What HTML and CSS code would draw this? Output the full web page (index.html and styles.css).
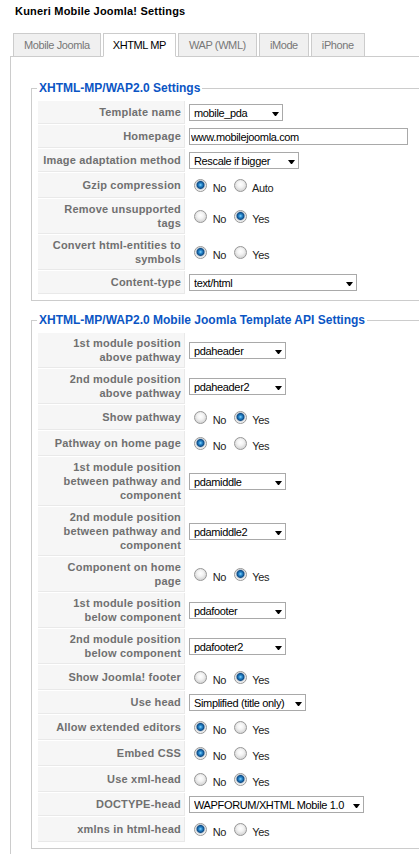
FILE: index.html
```html
<!DOCTYPE html>
<html lang="en">
<head>
    <meta charset="UTF-8">
    <meta name="viewport" content="width=device-width, initial-scale=1.0">
    <title>Kuneri Mobile Joomla! Settings</title>
    <link rel="stylesheet" href="styles.css">
</head>
<body>

<div class="page">
    <h1 class="title">Kuneri Mobile Joomla! Settings</h1>

    <ul class="tabs">
        <li>Mobile Joomla</li>
        <li class="open">XHTML MP</li>
        <li>WAP (WML)</li>
        <li>iMode</li>
        <li>iPhone</li>
    </ul>

    <div class="panel">
        <fieldset>
            <legend>XHTML-MP/WAP2.0 Settings</legend>
            <table class="admintable">
                <tr>
                    <td class="key">Template name</td>
                    <td><span class="dropdown w94"><select><option>mobile_pda</option></select></span></td>
                </tr>
                <tr>
                    <td class="key">Homepage</td>
                    <td><input type="text" class="textbox" value="www.mobilejoomla.com"></td>
                </tr>
                <tr>
                    <td class="key">Image adaptation method</td>
                    <td><span class="dropdown w110"><select><option>Rescale if bigger</option></select></span></td>
                </tr>
                <tr>
                    <td class="key">Gzip compression</td>
                    <td><input type="radio" name="gzip" id="gzip0" checked> <label for="gzip0">No</label> <input type="radio" name="gzip" id="gzip1"> <label for="gzip1">Auto</label></td>
                </tr>
                <tr>
                    <td class="key">Remove unsupported tags</td>
                    <td><input type="radio" name="striptags" id="striptags0"> <label for="striptags0">No</label> <input type="radio" name="striptags" id="striptags1" checked> <label for="striptags1">Yes</label></td>
                </tr>
                <tr>
                    <td class="key">Convert html-entities to symbols</td>
                    <td><input type="radio" name="entities" id="entities0" checked> <label for="entities0">No</label> <input type="radio" name="entities" id="entities1"> <label for="entities1">Yes</label></td>
                </tr>
                <tr>
                    <td class="key">Content-type</td>
                    <td><span class="dropdown w168"><select><option>text/html</option></select></span></td>
                </tr>
            </table>
        </fieldset>

        <fieldset>
            <legend>XHTML-MP/WAP2.0 Mobile Joomla Template API Settings</legend>
            <table class="admintable">
                <tr>
                    <td class="key">1st module position above pathway</td>
                    <td><span class="dropdown w97"><select><option>pdaheader</option></select></span></td>
                </tr>
                <tr>
                    <td class="key">2nd module position above pathway</td>
                    <td><span class="dropdown w97"><select><option>pdaheader2</option></select></span></td>
                </tr>
                <tr>
                    <td class="key">Show pathway</td>
                    <td><input type="radio" name="pathway" id="pathway0"> <label for="pathway0">No</label> <input type="radio" name="pathway" id="pathway1" checked> <label for="pathway1">Yes</label></td>
                </tr>
                <tr>
                    <td class="key">Pathway on home page</td>
                    <td><input type="radio" name="homepath" id="homepath0" checked> <label for="homepath0">No</label> <input type="radio" name="homepath" id="homepath1"> <label for="homepath1">Yes</label></td>
                </tr>
                <tr>
                    <td class="key">1st module position between pathway and component</td>
                    <td><span class="dropdown w97"><select><option>pdamiddle</option></select></span></td>
                </tr>
                <tr>
                    <td class="key">2nd module position between pathway and component</td>
                    <td><span class="dropdown w97"><select><option>pdamiddle2</option></select></span></td>
                </tr>
                <tr>
                    <td class="key">Component on home page</td>
                    <td><input type="radio" name="homecomp" id="homecomp0"> <label for="homecomp0">No</label> <input type="radio" name="homecomp" id="homecomp1" checked> <label for="homecomp1">Yes</label></td>
                </tr>
                <tr>
                    <td class="key">1st module position below component</td>
                    <td><span class="dropdown w97"><select><option>pdafooter</option></select></span></td>
                </tr>
                <tr>
                    <td class="key">2nd module position below component</td>
                    <td><span class="dropdown w97"><select><option>pdafooter2</option></select></span></td>
                </tr>
                <tr>
                    <td class="key">Show Joomla! footer</td>
                    <td><input type="radio" name="footer" id="footer0"> <label for="footer0">No</label> <input type="radio" name="footer" id="footer1" checked> <label for="footer1">Yes</label></td>
                </tr>
                <tr>
                    <td class="key">Use head</td>
                    <td><span class="dropdown w117"><select><option>Simplified (title only)</option></select></span></td>
                </tr>
                <tr>
                    <td class="key">Allow extended editors</td>
                    <td><input type="radio" name="editors" id="editors0" checked> <label for="editors0">No</label> <input type="radio" name="editors" id="editors1"> <label for="editors1">Yes</label></td>
                </tr>
                <tr>
                    <td class="key">Embed CSS</td>
                    <td><input type="radio" name="embedcss" id="embedcss0" checked> <label for="embedcss0">No</label> <input type="radio" name="embedcss" id="embedcss1"> <label for="embedcss1">Yes</label></td>
                </tr>
                <tr>
                    <td class="key">Use xml-head</td>
                    <td><input type="radio" name="xmlhead" id="xmlhead0"> <label for="xmlhead0">No</label> <input type="radio" name="xmlhead" id="xmlhead1" checked> <label for="xmlhead1">Yes</label></td>
                </tr>
                <tr>
                    <td class="key">DOCTYPE-head</td>
                    <td><span class="dropdown w175"><select><option>WAPFORUM/XHTML Mobile 1.0</option></select></span></td>
                </tr>
                <tr>
                    <td class="key">xmlns in html-head</td>
                    <td><input type="radio" name="xmlns" id="xmlns0" checked> <label for="xmlns0">No</label> <input type="radio" name="xmlns" id="xmlns1"> <label for="xmlns1">Yes</label></td>
                </tr>
            </table>
        </fieldset>
    </div>
</div>

</body>
</html>
```

FILE: styles.css
```css
html, body {
    overflow: hidden;
}
body {
    margin: 0;
    font-family: "Liberation Sans", Arial, sans-serif;
    font-size: 11px;
    color: #333;
    background: #fff;
}
.page {
    width: 700px;
    padding-left: 10px;
}
.title {
    margin: 0;
    padding: 4px 0 0 5px;
    font-size: 11px;
    line-height: 14px;
    letter-spacing: 0.2px;
    color: #000;
}

/* tab strip */
.tabs {
    list-style: none;
    display: flex;
    gap: 2px;
    margin: 15px 0 -1px 3px;
    padding: 0;
    position: relative;
    z-index: 1;
}
.tabs li {
    height: 22px;
    line-height: 22px;
    padding: 0 10px;
    border: 1px solid #ccc;
    background: #f0f0f0;
    color: #777;
    letter-spacing: -0.4px;
}
.tabs li.open {
    padding: 0 9px;
    background: #fff;
    border-bottom-color: #fff;
    color: #000;
}
.panel {
    border: 1px solid #ccc;
    padding: 24px 0 20px 20px;
}

fieldset {
    margin: 0 0 12px;
    padding: 5px;
    border: 1px solid #ccc;
}
legend {
    padding: 0 2px;
    color: #0b55c4;
    font-size: 12px;
    font-weight: bold;
    line-height: 14px;
}

/* settings table */
.admintable {
    border-spacing: 1px;
}
.admintable td {
    padding: 3px;
    line-height: 14px;
    letter-spacing: -0.35px;
}
.admintable td.key {
    width: 140px;
    background: #f6f6f6;
    border-bottom: 1px solid #e9e9e9;
    border-right: 1px solid #e9e9e9;
    text-align: right;
    color: #707070;
    font-weight: bold;
    letter-spacing: 0.2px;
}
.admintable label {
    color: #222;
}

.dropdown {
    display: inline-block;
    position: relative;
    height: 17px;
    vertical-align: top;
}
.dropdown select {
    -webkit-appearance: none;
    appearance: none;
    box-sizing: border-box;
    width: 100%;
    height: 100%;
    margin: 0;
    padding: 0 0 0 4px;
    border: 1px solid #a9a9a9;
    border-radius: 0;
    background: #fff;
    font-family: inherit;
    font-size: 11px;
    letter-spacing: -0.35px;
    color: #000;
}
.dropdown::after {
    content: "";
    position: absolute;
    right: 4px;
    top: 8px;
    width: 1px;
    height: 0;
    border-left: 3px solid transparent;
    border-right: 3px solid transparent;
    border-top: 4px solid #000;
    pointer-events: none;
}
.w94 { width: 94px; }
.w97 { width: 97px; }
.w110 { width: 110px; }
.w117 { width: 117px; }
.w168 { width: 168px; }
.w175 { width: 175px; }

.textbox {
    box-sizing: border-box;
    width: 219px;
    height: 17px;
    margin: 0;
    padding: 0 1px;
    border: 1px solid #a9a9a9;
    font-family: inherit;
    font-size: 11px;
    letter-spacing: -0.35px;
    color: #000;
    vertical-align: top;
}

/* radio buttons */
input[type="radio"] {
    -webkit-appearance: none;
    appearance: none;
    box-sizing: border-box;
    width: 13px;
    height: 13px;
    margin: 3px 3px 0 5px;
    border: 1px solid #979797;
    border-radius: 50%;
    background: radial-gradient(circle at 50% 40%, #fff 0, #f3f3f3 3px, #d9d9d9 6px);
}
input[type="radio"]:checked {
    background: radial-gradient(circle at 50% 45%, #8fd8fb 0, #2c8fd4 1.5px, #0d4a85 3.5px, #9fb5c9 4.2px, #e6e6e6 4.8px, #f6f6f6 6px);
}
```
